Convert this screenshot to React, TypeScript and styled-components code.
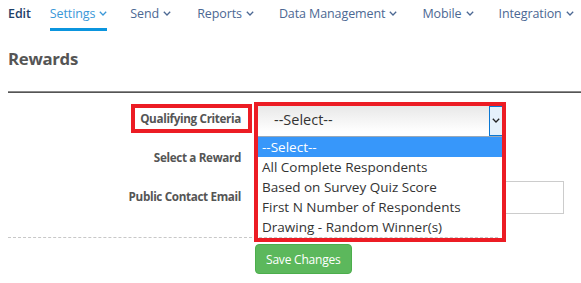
import React from "react";
import styled, { createGlobalStyle } from "styled-components";

const Global = createGlobalStyle`
  html, body { margin: 0; padding: 0; background: #fff; }
  body { font-family: "Open Sans", "Noto Sans", sans-serif; }
  * { box-sizing: border-box; }
`;

const Page = styled.div`
  width: 581px;
  height: 283px;
  overflow: hidden;
  padding: 0 0 0 8px;
`;

const Nav = styled.nav`
  display: flex;
  height: 31px;
  align-items: stretch;
`;

const NavItem = styled.div<{ $active?: boolean; $strong?: boolean; $gap: number }>`
  display: flex;
  align-items: center;
  gap: 4px;
  margin-right: ${(p) => p.$gap}px;
  padding-bottom: 1px;
  font-size: 12.5px;
  letter-spacing: -0.1px;
  color: ${(p) => (p.$active ? "#3a98d8" : p.$strong ? "#1f3f68" : "#4c6893")};
  font-weight: ${(p) => (p.$strong ? 600 : 400)};
  border-bottom: 3px solid ${(p) => (p.$active ? "#0b95de" : "transparent")};
  white-space: nowrap;
`;

const Chevron = ({ color = "currentColor" }: { color?: string }) => (
  <svg width="8" height="5" viewBox="0 0 8 5" fill="none">
    <path d="M0.8 0.8 L4 4 L7.2 0.8" stroke={color} strokeWidth="1.3" />
  </svg>
);

const Title = styled.h1`
  margin: 17px 0 0;
  font-size: 16.8px;
  line-height: 22px;
  font-weight: 700;
  color: #555;
  letter-spacing: -0.3px;
`;

const Divider = styled.div`
  margin-top: 21px;
  height: 2px;
  background: linear-gradient(#8a8a8a 50%, #555 50%);
`;

const Form = styled.div`
  padding-top: 13px;
  display: flex;
  flex-direction: column;
`;

const Row = styled.div<{ $h: number; $mb: number }>`
  display: grid;
  grid-template-columns: 233px 306px;
  column-gap: 17px;
  align-items: center;
  height: ${(p) => p.$h}px;
  margin-bottom: ${(p) => p.$mb}px;
`;

const Label = styled.div<{ $shift?: number }>`
  text-align: right;
  font-size: 11.7px;
  font-weight: 700;
  color: #555;
  letter-spacing: -0.35px;
  position: relative;
  top: ${(p) => p.$shift ?? 0}px;
`;

const Marked = styled.span`
  position: relative;
  &::after {
    content: "";
    position: absolute;
    left: -9px;
    right: -11px;
    top: -6px;
    bottom: -7px;
    border: 4px solid #ec1c24;
  }
`;

const Field = styled.div`
  position: relative;
  height: 100%;
`;

const SelectBox = styled.div`
  width: 244px;
  height: 30px;
  display: flex;
  align-items: center;
  background: linear-gradient(#e8e8e8, #ffffff 85%);
  font-size: 14.5px;
  color: #333;
  padding-left: 16px;
  padding-bottom: 3px;
  position: relative;
`;

const SelectButton = styled.div`
  position: absolute;
  right: 0;
  top: 0;
  width: 13px;
  height: 30px;
  background: #e5f1fb;
  border: 1px solid #0a78d4;
  border-right: none;
  display: flex;
  align-items: center;
  justify-content: center;
  padding-bottom: 2px;
  color: #222;
`;

const List = styled.div`
  position: absolute;
  left: 0;
  top: 30px;
  width: 244px;
  background: #fff;
  border-top: 1px solid #9aa9b8;
  z-index: 2;
`;

const Option = styled.div<{ $selected?: boolean }>`
  height: 20px;
  line-height: 20px;
  padding-left: 4px;
  font-size: 13.5px;
  color: ${(p) => (p.$selected ? "#fff" : "#333")};
  background: ${(p) => (p.$selected ? "#3797fa" : "transparent")};
  white-space: nowrap;
`;

const Frame = styled.div`
  position: absolute;
  left: -4px;
  top: -4px;
  width: 252px;
  height: 140px;
  border: 4px solid #ec1c24;
  z-index: 3;
  pointer-events: none;
`;

const Input = styled.div`
  width: 306px;
  height: 33px;
  border: 1px solid #ccc;
  background: #fff;
`;

const Dashed = styled.div`
  width: 490px;
  margin-top: 23px;
  border-top: 1px dashed #c8c8c8;
`;

const SaveButton = styled.button`
  margin: 6px 0 0 247px;
  height: 30px;
  padding: 0 10px;
  background: #5cb85c;
  border: 1px solid #4cae4c;
  border-radius: 4px;
  color: #fff;
  font-family: inherit;
  font-size: 12px;
  letter-spacing: -0.2px;
  align-self: flex-start;
`;

const navItems = [
  { label: "Edit", strong: true, chevron: false, gap: 19 },
  { label: "Settings", active: true, chevron: true, gap: 23 },
  { label: "Send", chevron: true, gap: 26 },
  { label: "Reports", chevron: true, gap: 25 },
  { label: "Data Management", chevron: true, gap: 25 },
  { label: "Mobile", chevron: true, gap: 25 },
  { label: "Integration", chevron: true, gap: 0 },
];

const options = [
  "--Select--",
  "All Complete Respondents",
  "Based on Survey Quiz Score",
  "First N Number of Respondents",
  "Drawing - Random Winner(s)",
];

export default function App() {
  return (
    <>
      <Global />
      <Page>
        <Nav>
          {navItems.map((n) => (
            <NavItem key={n.label} $active={n.active} $strong={n.strong} $gap={n.gap}>
              {n.label}
              {n.chevron && <Chevron />}
            </NavItem>
          ))}
        </Nav>
        <Title>Rewards</Title>
        <Divider />
        <Form>
          <Row $h={30} $mb={6}>
            <Label $shift={-3.5}>
              <Marked>Qualifying Criteria</Marked>
            </Label>
            <Field>
              <SelectBox>
                --Select--
                <SelectButton>
                  <Chevron />
                </SelectButton>
              </SelectBox>
              <List>
                {options.map((o, i) => (
                  <Option key={o} $selected={i === 0}>
                    {o}
                  </Option>
                ))}
              </List>
              <Frame />
            </Field>
          </Row>
          <Row $h={30} $mb={9}>
            <Label>Select a Reward</Label>
            <Field />
          </Row>
          <Row $h={33} $mb={0}>
            <Label $shift={-2}>Public Contact Email</Label>
            <Field>
              <Input />
            </Field>
          </Row>
          <Dashed />
          <SaveButton>Save Changes</SaveButton>
        </Form>
      </Page>
    </>
  );
}
